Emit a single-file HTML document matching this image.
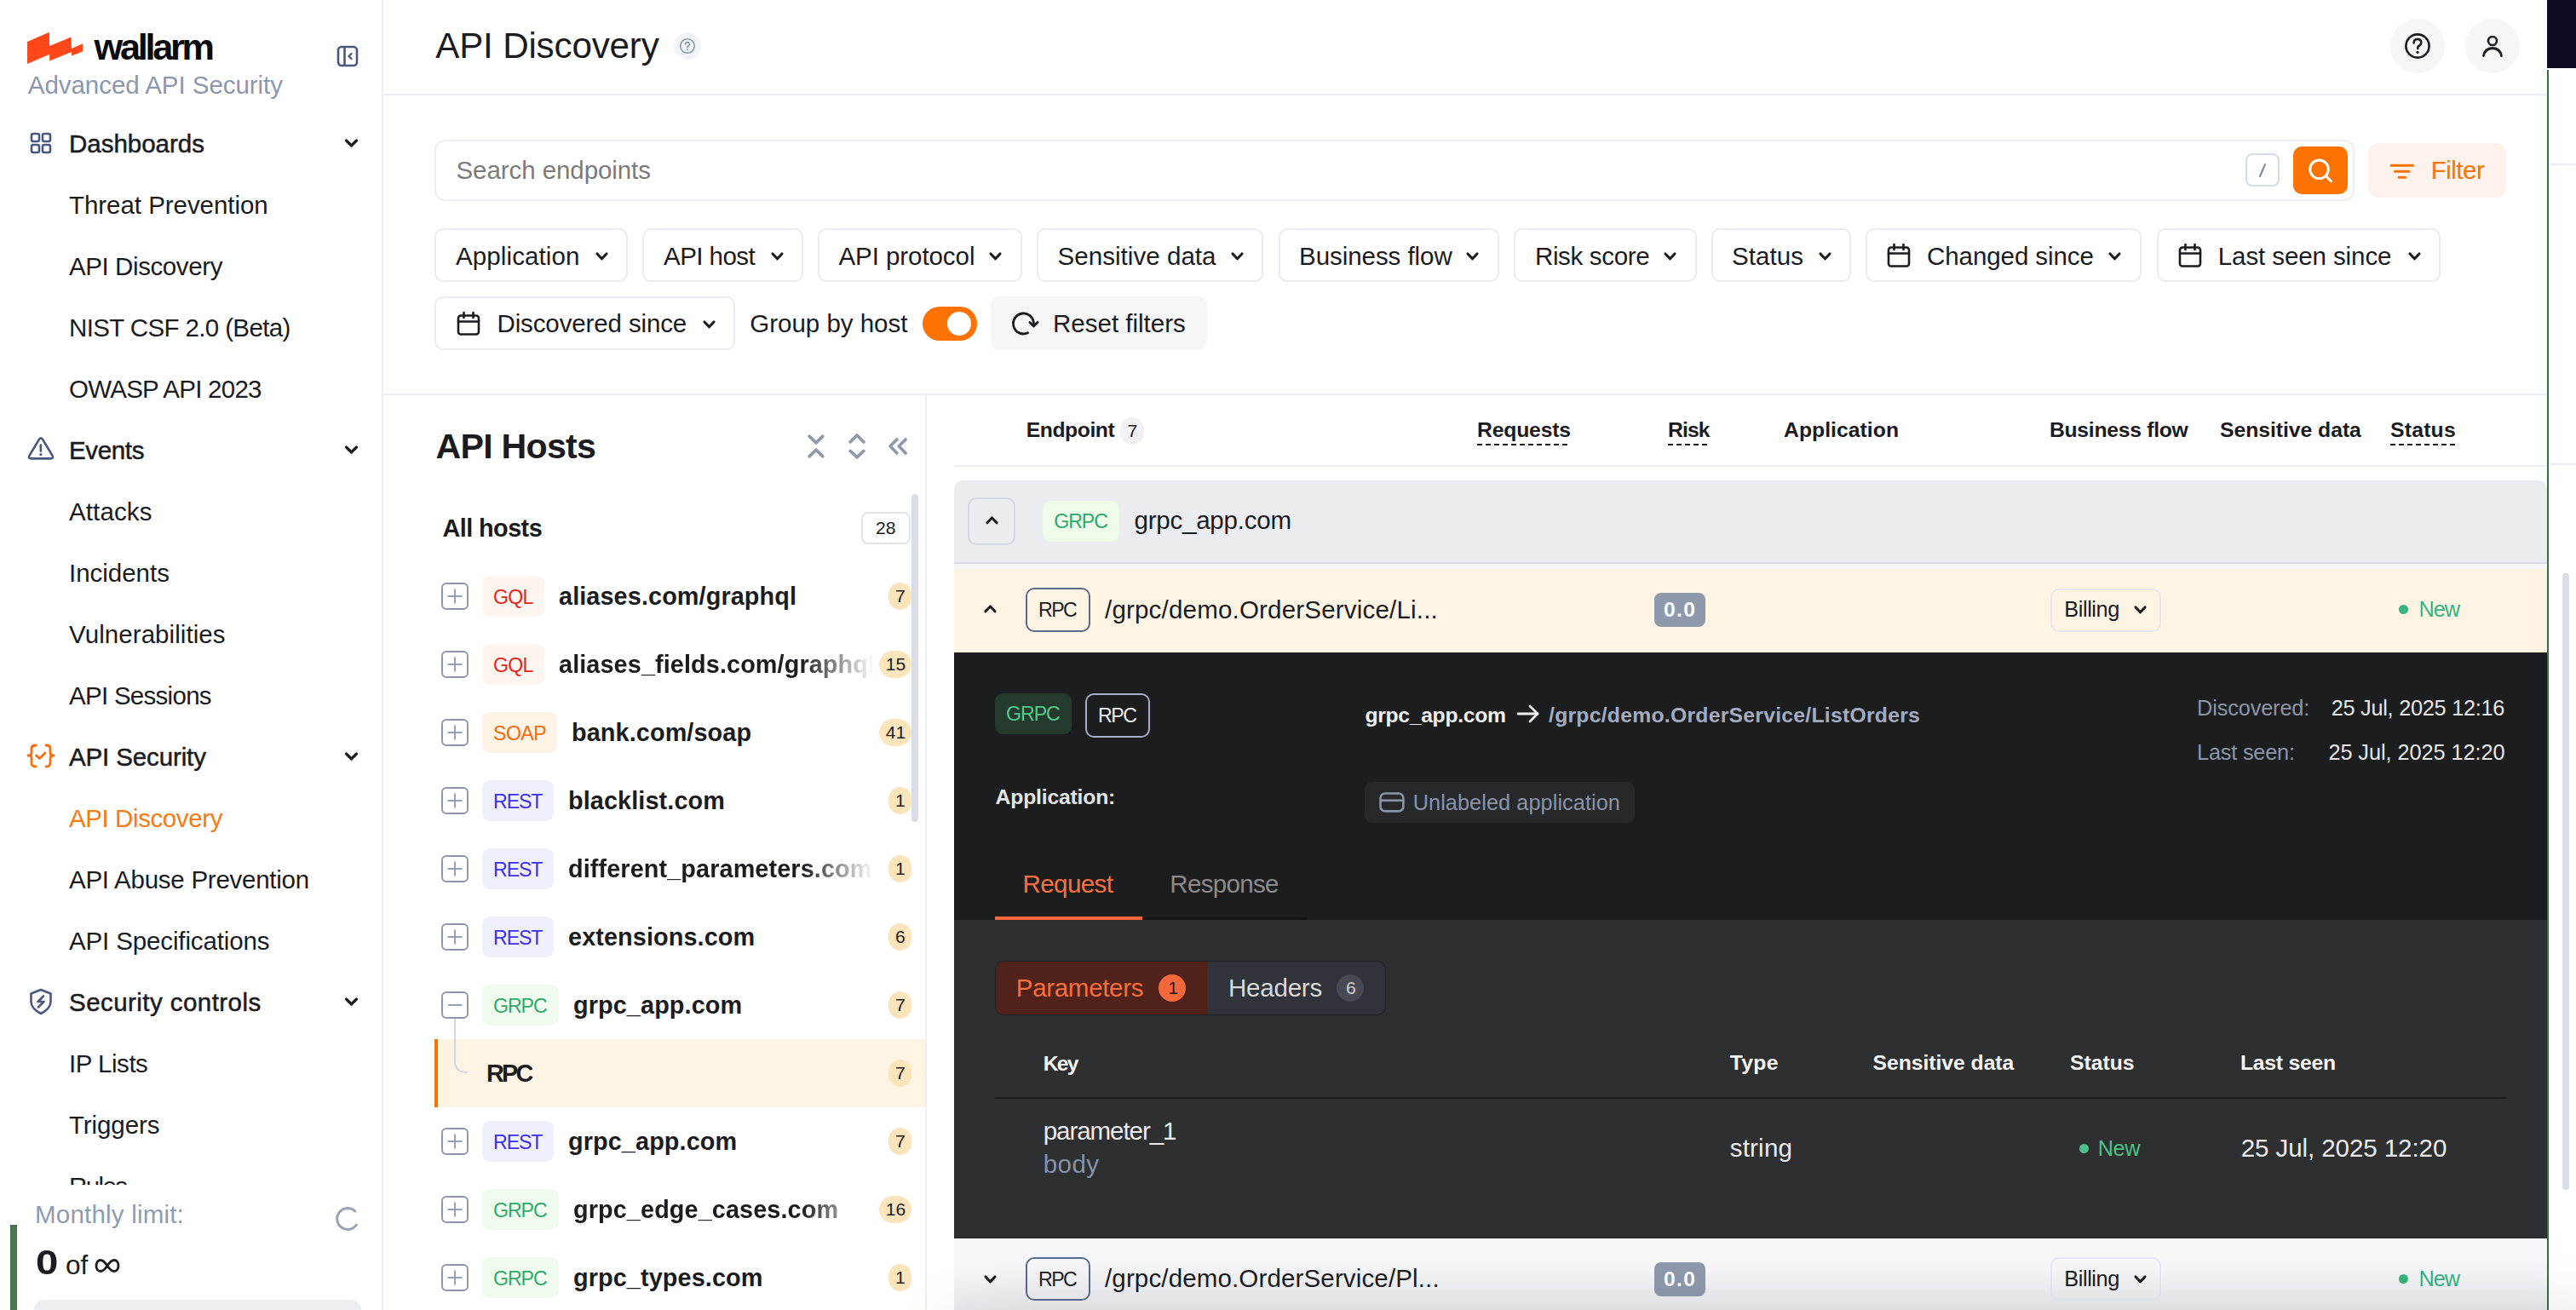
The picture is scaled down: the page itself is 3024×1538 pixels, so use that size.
<!DOCTYPE html><html><head><meta charset="utf-8"><style>
html,body{margin:0;padding:0;width:3024px;height:1538px;overflow:hidden;background:#fff;}
body{position:relative;font-family:"Liberation Sans",sans-serif;}
.t{position:absolute;white-space:nowrap;}
.b{position:absolute;box-sizing:border-box;}
.s{position:absolute;overflow:visible;}
</style></head><body>
<div class="b" style="left:448px;top:0px;width:2px;height:1538px;background:#eceef3"></div>
<svg class="s" style="left:28px;top:34px;" width="74" height="46" viewBox="28 34 74 46"><polygon fill="#ff4719" points="32.04,48.93 57.86,37.86 58.14,54.02 83.57,43.48 83.92,57.0 97.02,51.21 97.02,60.52 84.13,65.61 83.92,61.05 58.21,71.58 58.14,63.86 32.04,75.1"/></svg>
<div class="t" style="left:110.6px;top:34.4px;font-size:43.26px;line-height:43px;color:#0b0b0f;font-weight:700;letter-spacing:-3.29px;">wallarm</div>
<div class="t" style="left:32.8px;top:84.7px;font-size:29.54px;line-height:30px;color:#8b97ad;letter-spacing:-0.06px;">Advanced API Security</div>
<svg class="s" style="left:394px;top:52px;" width="28" height="28" viewBox="0 0 28 28"><rect x="3" y="3" width="22" height="22" rx="4" fill="none" stroke="#4a5880" stroke-width="2.6"/><line x1="10.5" y1="3" x2="10.5" y2="25" stroke="#4a5880" stroke-width="2.6"/><polyline points="18.5,11 15.5,14 18.5,17" fill="none" stroke="#4a5880" stroke-width="2.4" stroke-linecap="round" stroke-linejoin="round"/></svg>
<div class="t" style="left:81.0px;top:153.6px;font-size:29.54px;line-height:30px;color:#1b1c1f;letter-spacing:-0.03px;-webkit-text-stroke:0.5px #1b1c1f;">Dashboards</div>
<svg class="s" style="left:403px;top:162px;" width="18" height="12" viewBox="0 0 18 12"><polyline points="3.5,3 9.5,9 15.5,3" fill="none" stroke="#1b1c1f" stroke-width="3.2" stroke-linecap="round" stroke-linejoin="round"/></svg>
<div class="t" style="left:81.0px;top:225.6px;font-size:29.54px;line-height:30px;color:#1b1c1f;letter-spacing:-0.06px;">Threat Prevention</div>
<div class="t" style="left:81.0px;top:297.6px;font-size:29.54px;line-height:30px;color:#1b1c1f;letter-spacing:-0.42px;">API Discovery</div>
<div class="t" style="left:81.0px;top:369.6px;font-size:29.54px;line-height:30px;color:#1b1c1f;letter-spacing:-0.64px;">NIST CSF 2.0 (Beta)</div>
<div class="t" style="left:81.0px;top:441.6px;font-size:29.54px;line-height:30px;color:#1b1c1f;letter-spacing:-0.76px;">OWASP API 2023</div>
<div class="t" style="left:81.0px;top:513.6px;font-size:29.54px;line-height:30px;color:#1b1c1f;letter-spacing:-0.36px;-webkit-text-stroke:0.5px #1b1c1f;">Events</div>
<svg class="s" style="left:403px;top:522px;" width="18" height="12" viewBox="0 0 18 12"><polyline points="3.5,3 9.5,9 15.5,3" fill="none" stroke="#1b1c1f" stroke-width="3.2" stroke-linecap="round" stroke-linejoin="round"/></svg>
<div class="t" style="left:81.0px;top:585.6px;font-size:29.54px;line-height:30px;color:#1b1c1f;letter-spacing:0.11px;">Attacks</div>
<div class="t" style="left:81.0px;top:657.6px;font-size:29.54px;line-height:30px;color:#1b1c1f;letter-spacing:-0.03px;">Incidents</div>
<div class="t" style="left:81.0px;top:729.6px;font-size:29.54px;line-height:30px;color:#1b1c1f;letter-spacing:0.06px;">Vulnerabilities</div>
<div class="t" style="left:81.0px;top:801.6px;font-size:29.54px;line-height:30px;color:#1b1c1f;letter-spacing:-0.73px;">API Sessions</div>
<div class="t" style="left:81.0px;top:873.6px;font-size:29.54px;line-height:30px;color:#1b1c1f;letter-spacing:-0.14px;-webkit-text-stroke:0.5px #1b1c1f;">API Security</div>
<svg class="s" style="left:403px;top:882px;" width="18" height="12" viewBox="0 0 18 12"><polyline points="3.5,3 9.5,9 15.5,3" fill="none" stroke="#1b1c1f" stroke-width="3.2" stroke-linecap="round" stroke-linejoin="round"/></svg>
<div class="t" style="left:81.0px;top:945.6px;font-size:29.54px;line-height:30px;color:#f77a12;letter-spacing:-0.42px;">API Discovery</div>
<div class="t" style="left:81.0px;top:1017.6px;font-size:29.54px;line-height:30px;color:#1b1c1f;letter-spacing:-0.27px;">API Abuse Prevention</div>
<div class="t" style="left:81.0px;top:1089.6px;font-size:29.54px;line-height:30px;color:#1b1c1f;letter-spacing:-0.15px;">API Specifications</div>
<div class="t" style="left:81.0px;top:1161.6px;font-size:29.54px;line-height:30px;color:#1b1c1f;letter-spacing:0.43px;-webkit-text-stroke:0.5px #1b1c1f;">Security controls</div>
<svg class="s" style="left:403px;top:1170px;" width="18" height="12" viewBox="0 0 18 12"><polyline points="3.5,3 9.5,9 15.5,3" fill="none" stroke="#1b1c1f" stroke-width="3.2" stroke-linecap="round" stroke-linejoin="round"/></svg>
<div class="t" style="left:81.0px;top:1233.6px;font-size:29.54px;line-height:30px;color:#1b1c1f;letter-spacing:-0.49px;">IP Lists</div>
<div class="t" style="left:81.0px;top:1305.6px;font-size:29.54px;line-height:30px;color:#1b1c1f;letter-spacing:-0.10px;">Triggers</div>
<div class="t" style="left:81.0px;top:1377.6px;font-size:29.54px;line-height:30px;color:#1b1c1f;letter-spacing:-1.63px;">Rules</div>
<svg class="s" style="left:34px;top:154px;" width="28" height="28" viewBox="0 0 28 28"><g fill="none" stroke="#4a5880" stroke-width="2.6"><rect x="3" y="3" width="9" height="9" rx="2"/><rect x="16" y="3" width="9" height="9" rx="2"/><rect x="3" y="16" width="9" height="9" rx="2"/><rect x="16" y="16" width="9" height="9" rx="2"/></g></svg>
<svg class="s" style="left:31px;top:511px;" width="34" height="32" viewBox="0 0 34 32"><g fill="none" stroke="#4a5880" stroke-width="2.7" stroke-linejoin="round" stroke-linecap="round"><path d="M14.6 5.4 Q17 1.4 19.4 5.4 L30.2 23.4 Q32.6 27.3 28.1 27.3 L5.9 27.3 Q1.4 27.3 3.8 23.4 Z"/><line x1="16.85" y1="11.5" x2="16.85" y2="18.6"/></g><circle cx="16.85" cy="22.7" r="1.6" fill="#4a5880"/></svg>
<svg class="s" style="left:30px;top:872px;" width="36" height="32" viewBox="0 0 36 32"><g fill="none" stroke="#fc6d0a" stroke-width="2.8" stroke-linecap="round" stroke-linejoin="round"><path d="M12 3 Q7 3 7 7 L7 12 Q7 15 3 15 Q7 15 7 18 L7 24 Q7 28 12 28"/><path d="M24 3 Q29 3 29 7 L29 12 Q29 15 33 15 Q29 15 29 18 L29 24 Q29 28 24 28"/><polyline points="12.5,15 16.5,18.5 23,12"/></g></svg>
<svg class="s" style="left:33px;top:1159px;" width="30" height="34" viewBox="0 0 30 34"><g fill="none" stroke="#4a5880" stroke-width="2.6" stroke-linejoin="round" stroke-linecap="round"><path d="M15 3 L26.5 7.5 L26.5 17 Q26.5 25 15 31 Q3.5 25 3.5 17 L3.5 7.5 Z"/><path d="M18 10.5 L11.5 17 L18.5 17 L12 23.5"/></g></svg>
<div class="b" style="left:0px;top:1391px;width:448px;height:147px;background:#fff"></div>
<div class="b" style="left:12px;top:1438px;width:8px;height:100px;background:#4a7350"></div>
<div class="t" style="left:41.0px;top:1411.0px;font-size:29.54px;line-height:30px;color:#8f9bb0;letter-spacing:0.19px;">Monthly limit:</div>
<svg class="s" style="left:390px;top:1412px;" width="32" height="36" viewBox="0 0 32 36"><path d="M27 10 A12.5 12.5 0 1 0 28.5 26" fill="none" stroke="#9aa3b5" stroke-width="3" stroke-linecap="round"/></svg>
<div class="t" style="left:42.0px;top:1462.0px;font-size:41.2px;line-height:41px;color:#1b1c1f;font-weight:700;letter-spacing:0.00px;transform:scaleX(1.15);transform-origin:0 0;">0</div>
<div class="t" style="left:77.0px;top:1469.0px;font-size:31.65px;line-height:32px;color:#1b1c1f;letter-spacing:0.00px;">of</div>
<svg class="s" style="left:110px;top:1476px;" width="32" height="20" viewBox="0 0 32 20"><path d="M16 10 C13 5.5 10.5 3.5 8 3.5 C5 3.5 3 6.3 3 10 C3 13.7 5 16.5 8 16.5 C10.5 16.5 13 14.5 16 10 C19 5.5 21.5 3.5 24 3.5 C27 3.5 29 6.3 29 10 C29 13.7 27 16.5 24 16.5 C21.5 16.5 19 14.5 16 10 Z" fill="none" stroke="#1b1c1f" stroke-width="2.8"/></svg>
<div class="b" style="left:40px;top:1526px;width:384px;height:34px;background:#edeef2;border-radius:12px"></div>
<div class="b" style="left:450px;top:110px;width:2540px;height:2px;background:#eceef3"></div>
<div class="t" style="left:511.2px;top:33.2px;font-size:42.2px;line-height:42px;color:#1b1c1f;letter-spacing:-0.19px;">API Discovery</div>
<div class="b" style="left:791px;top:38px;width:32px;height:32px;background:#f3f4f6;border-radius:50%"></div>
<svg class="s" style="left:797px;top:44px;" width="20" height="20" viewBox="0 0 20 20"><circle cx="10" cy="10" r="8.3" fill="none" stroke="#8a9ab3" stroke-width="1.6"/><path d="M7.6 8.1 Q7.6 5.6 10 5.6 Q12.4 5.6 12.4 7.9 Q12.4 9.5 10 10.6 L10 11.8" fill="none" stroke="#8a9ab3" stroke-width="1.6" stroke-linecap="round"/><circle cx="10" cy="14.3" r="1" fill="#8a9ab3"/></svg>
<div class="b" style="left:2806px;top:22px;width:64px;height:64px;background:#f6f6f7;border-radius:50%"></div>
<svg class="s" style="left:2821px;top:37px;" width="34" height="34" viewBox="0 0 34 34"><circle cx="17" cy="17" r="13.6" fill="none" stroke="#1b1c1f" stroke-width="2.6"/><path d="M12.6 13.5 Q12.6 9 17 9 Q21.3 9 21.3 13 Q21.3 15.5 17.5 17.8 L17.3 20" fill="none" stroke="#1b1c1f" stroke-width="2.6" stroke-linecap="round"/><circle cx="17" cy="24.3" r="1.6" fill="#1b1c1f"/></svg>
<div class="b" style="left:2894px;top:22px;width:64px;height:64px;background:#f6f6f7;border-radius:50%"></div>
<svg class="s" style="left:2910px;top:40px;" width="32" height="32" viewBox="0 0 32 32"><circle cx="16" cy="8" r="5" fill="none" stroke="#1b1c1f" stroke-width="2.6"/><path d="M5.5 25.5 Q7 17 16 16.5 Q25 17 26.5 25.5" fill="none" stroke="#1b1c1f" stroke-width="2.8" stroke-linecap="round"/></svg>
<div class="b" style="left:2990px;top:0px;width:34px;height:80px;background:#0c0d22"></div>
<div class="b" style="left:2990px;top:82px;width:2px;height:1456px;background:#3b6b43"></div>
<div class="b" style="left:2993px;top:192px;width:31px;height:2px;background:#eceef3"></div>
<div class="b" style="left:2993px;top:544px;width:31px;height:2px;background:#eceef3"></div>
<div class="b" style="left:3008px;top:673px;width:8px;height:724px;background:#d9dde5;border-radius:4px"></div>
<div class="b" style="left:510px;top:164px;width:2254px;height:72px;border:2px solid #eceef3;border-radius:12px"></div>
<div class="t" style="left:535.5px;top:185.0px;font-size:29.54px;line-height:30px;color:#7b7b7d;letter-spacing:-0.09px;">Search endpoints</div>
<div class="b" style="left:2636px;top:180px;width:40px;height:39px;border:2px solid #d5dbe6;border-radius:8px"></div>
<svg class="s" style="left:2646px;top:189px;" width="20" height="22" viewBox="0 0 20 22"><line x1="13" y1="4" x2="7" y2="18" stroke="#7d879c" stroke-width="2" stroke-linecap="round"/></svg>
<div class="b" style="left:2692px;top:172px;width:64px;height:56px;background:#fc7303;border-radius:10px"></div>
<svg class="s" style="left:2706px;top:184px;" width="36" height="34" viewBox="0 0 36 34"><circle cx="16.5" cy="14.8" r="10.8" fill="none" stroke="#fff" stroke-width="3"/><line x1="24.5" y1="22.8" x2="30.5" y2="28.8" stroke="#fff" stroke-width="3" stroke-linecap="round"/></svg>
<div class="b" style="left:2780px;top:168px;width:162px;height:64px;background:#fdf2ec;border-radius:12px"></div>
<svg class="s" style="left:2804px;top:190px;" width="32" height="22" viewBox="0 0 32 22"><g stroke="#fc7303" stroke-width="3" stroke-linecap="round"><line x1="3" y1="4.3" x2="28.5" y2="4.3"/><line x1="7.5" y1="11.3" x2="24" y2="11.3"/><line x1="12" y1="18.3" x2="19.5" y2="18.3"/></g></svg>
<div class="t" style="left:2853.8px;top:185.0px;font-size:29.54px;line-height:30px;color:#fc7303;letter-spacing:-0.53px;">Filter</div>
<div class="b" style="left:510px;top:268px;width:227px;height:63px;border:2px solid #ebecf1;border-radius:10px"></div>
<div class="t" style="left:535.0px;top:285.7px;font-size:29.54px;line-height:30px;color:#1b1c1f;letter-spacing:0.10px;">Application</div>
<svg class="s" style="left:698px;top:295px;" width="17" height="11.8" viewBox="0 0 17 11.8"><polyline points="3,3 8.5,8.8 14,3" fill="none" stroke="#1b1c1f" stroke-width="3.1" stroke-linecap="round" stroke-linejoin="round"/></svg>
<div class="b" style="left:754px;top:268px;width:189px;height:63px;border:2px solid #ebecf1;border-radius:10px"></div>
<div class="t" style="left:779.0px;top:285.7px;font-size:29.54px;line-height:30px;color:#1b1c1f;letter-spacing:-0.55px;">API host</div>
<svg class="s" style="left:904px;top:295px;" width="17" height="11.8" viewBox="0 0 17 11.8"><polyline points="3,3 8.5,8.8 14,3" fill="none" stroke="#1b1c1f" stroke-width="3.1" stroke-linecap="round" stroke-linejoin="round"/></svg>
<div class="b" style="left:960px;top:268px;width:240px;height:63px;border:2px solid #ebecf1;border-radius:10px"></div>
<div class="t" style="left:984.4px;top:285.7px;font-size:29.54px;line-height:30px;color:#1b1c1f;letter-spacing:-0.07px;">API protocol</div>
<svg class="s" style="left:1160px;top:295px;" width="17" height="11.8" viewBox="0 0 17 11.8"><polyline points="3,3 8.5,8.8 14,3" fill="none" stroke="#1b1c1f" stroke-width="3.1" stroke-linecap="round" stroke-linejoin="round"/></svg>
<div class="b" style="left:1217px;top:268px;width:266px;height:63px;border:2px solid #ebecf1;border-radius:10px"></div>
<div class="t" style="left:1241.6px;top:285.7px;font-size:29.54px;line-height:30px;color:#1b1c1f;letter-spacing:0.03px;">Sensitive data</div>
<svg class="s" style="left:1444px;top:295px;" width="17" height="11.8" viewBox="0 0 17 11.8"><polyline points="3,3 8.5,8.8 14,3" fill="none" stroke="#1b1c1f" stroke-width="3.1" stroke-linecap="round" stroke-linejoin="round"/></svg>
<div class="b" style="left:1501px;top:268px;width:259px;height:63px;border:2px solid #ebecf1;border-radius:10px"></div>
<div class="t" style="left:1525.0px;top:285.7px;font-size:29.54px;line-height:30px;color:#1b1c1f;letter-spacing:-0.07px;">Business flow</div>
<svg class="s" style="left:1720px;top:295px;" width="17" height="11.8" viewBox="0 0 17 11.8"><polyline points="3,3 8.5,8.8 14,3" fill="none" stroke="#1b1c1f" stroke-width="3.1" stroke-linecap="round" stroke-linejoin="round"/></svg>
<div class="b" style="left:1777px;top:268px;width:215px;height:63px;border:2px solid #ebecf1;border-radius:10px"></div>
<div class="t" style="left:1801.9px;top:285.7px;font-size:29.54px;line-height:30px;color:#1b1c1f;letter-spacing:-0.34px;">Risk score</div>
<svg class="s" style="left:1952px;top:295px;" width="17" height="11.8" viewBox="0 0 17 11.8"><polyline points="3,3 8.5,8.8 14,3" fill="none" stroke="#1b1c1f" stroke-width="3.1" stroke-linecap="round" stroke-linejoin="round"/></svg>
<div class="b" style="left:2009px;top:268px;width:164px;height:63px;border:2px solid #ebecf1;border-radius:10px"></div>
<div class="t" style="left:2033.0px;top:285.7px;font-size:29.54px;line-height:30px;color:#1b1c1f;letter-spacing:0.05px;">Status</div>
<svg class="s" style="left:2134px;top:295px;" width="17" height="11.8" viewBox="0 0 17 11.8"><polyline points="3,3 8.5,8.8 14,3" fill="none" stroke="#1b1c1f" stroke-width="3.1" stroke-linecap="round" stroke-linejoin="round"/></svg>
<div class="b" style="left:2190px;top:268px;width:324px;height:63px;border:2px solid #ebecf1;border-radius:10px"></div>
<div class="t" style="left:2262.0px;top:285.7px;font-size:29.54px;line-height:30px;color:#1b1c1f;letter-spacing:-0.09px;">Changed since</div>
<svg class="s" style="left:2474px;top:295px;" width="17" height="11.8" viewBox="0 0 17 11.8"><polyline points="3,3 8.5,8.8 14,3" fill="none" stroke="#1b1c1f" stroke-width="3.1" stroke-linecap="round" stroke-linejoin="round"/></svg>
<svg class="s" style="left:2215px;top:285px;" width="28" height="30" viewBox="0 0 28 30"><g fill="none" stroke="#1b1c1f" stroke-width="2.6" stroke-linejoin="round" stroke-linecap="round"><rect x="2" y="5.5" width="24" height="22" rx="3"/><line x1="2" y1="12.5" x2="26" y2="12.5"/><line x1="8.5" y1="2" x2="8.5" y2="8"/><line x1="19.5" y1="2" x2="19.5" y2="8"/></g></svg>
<div class="b" style="left:2532px;top:268px;width:333px;height:63px;border:2px solid #ebecf1;border-radius:10px"></div>
<div class="t" style="left:2603.8px;top:285.7px;font-size:29.54px;line-height:30px;color:#1b1c1f;letter-spacing:-0.11px;">Last seen since</div>
<svg class="s" style="left:2826px;top:295px;" width="17" height="11.8" viewBox="0 0 17 11.8"><polyline points="3,3 8.5,8.8 14,3" fill="none" stroke="#1b1c1f" stroke-width="3.1" stroke-linecap="round" stroke-linejoin="round"/></svg>
<svg class="s" style="left:2557px;top:285px;" width="28" height="30" viewBox="0 0 28 30"><g fill="none" stroke="#1b1c1f" stroke-width="2.6" stroke-linejoin="round" stroke-linecap="round"><rect x="2" y="5.5" width="24" height="22" rx="3"/><line x1="2" y1="12.5" x2="26" y2="12.5"/><line x1="8.5" y1="2" x2="8.5" y2="8"/><line x1="19.5" y1="2" x2="19.5" y2="8"/></g></svg>
<div class="b" style="left:510px;top:348px;width:353px;height:63px;border:2px solid #ebecf1;border-radius:10px"></div>
<svg class="s" style="left:536px;top:365px;" width="28" height="30" viewBox="0 0 28 30"><g fill="none" stroke="#1b1c1f" stroke-width="2.6" stroke-linejoin="round" stroke-linecap="round"><rect x="2" y="5.5" width="24" height="22" rx="3"/><line x1="2" y1="12.5" x2="26" y2="12.5"/><line x1="8.5" y1="2" x2="8.5" y2="8"/><line x1="19.5" y1="2" x2="19.5" y2="8"/></g></svg>
<div class="t" style="left:583.5px;top:365.0px;font-size:29.54px;line-height:30px;color:#1b1c1f;letter-spacing:-0.14px;">Discovered since</div>
<svg class="s" style="left:824px;top:375px;" width="17" height="11.8" viewBox="0 0 17 11.8"><polyline points="3,3 8.5,8.8 14,3" fill="none" stroke="#1b1c1f" stroke-width="3.1" stroke-linecap="round" stroke-linejoin="round"/></svg>
<div class="t" style="left:880.3px;top:365.0px;font-size:29.54px;line-height:30px;color:#1b1c1f;letter-spacing:-0.03px;">Group by host</div>
<div class="b" style="left:1083px;top:360px;width:64px;height:40px;background:#fc7303;border-radius:20px"></div>
<div class="b" style="left:1112px;top:366px;width:28px;height:28px;background:#fff;border-radius:50%"></div>
<div class="b" style="left:1163px;top:348px;width:254px;height:63px;background:#f6f6f7;border-radius:10px"></div>
<svg class="s" style="left:1170px;top:350px;" width="70" height="60" viewBox="0 0 70 60"><g fill="none" stroke="#1b1c1f" stroke-width="2.8" stroke-linecap="round" stroke-linejoin="round"><path d="M36.6 40.8 A12 12 0 1 1 43.4 31"/><polyline points="38.9,28.6 43.5,33 48.1,28.2"/></g></svg>
<div class="t" style="left:1236.0px;top:365.0px;font-size:29.54px;line-height:30px;color:#1b1c1f;letter-spacing:-0.01px;">Reset filters</div>
<div class="b" style="left:450px;top:462px;width:2540px;height:2px;background:#eceef3"></div>
<div class="b" style="left:1086px;top:464px;width:2px;height:1074px;background:#eceef3"></div>
<div class="t" style="left:511.5px;top:504.4px;font-size:41.2px;line-height:41px;color:#1b1c1f;font-weight:700;letter-spacing:-0.76px;">API Hosts</div>
<svg class="s" style="left:930px;top:495px;" width="150" height="55" viewBox="0 0 150 55"><g fill="none" stroke="#8e99ab" stroke-width="3.7" stroke-linecap="round" stroke-linejoin="round"><polyline points="20.1,17.2 28,24.8 35.8,17.2"/><polyline points="20.1,40.8 28,33.2 35.8,40.8"/><polyline points="68.1,23.9 76,16 83.9,23.9"/><polyline points="68.1,34.4 76,41.9 83.9,34.4"/><polyline points="122.9,21 115,28.8 122.9,37"/><polyline points="133.1,21 125.2,28.8 133.1,37"/></g></svg>
<div class="b" style="left:1070px;top:580px;width:8px;height:385px;background:#d9dde6;border-radius:4px"></div>
<div class="t" style="left:519.5px;top:606.0px;font-size:28.84px;line-height:29px;color:#1b1c1f;font-weight:700;letter-spacing:-0.57px;">All hosts</div>
<div class="b" style="left:1011px;top:601px;width:58px;height:38px;border:2px solid #e2e5eb;border-radius:8px;background:#fff"></div>
<div class="t" style="left:1028.0px;top:608.6px;font-size:21.1px;line-height:21px;color:#1b1c1f;letter-spacing:0.00px;">28</div>
<div class="b" style="left:518px;top:684px;width:32px;height:32px;border:2px solid #8e99ae;border-radius:6px"></div>
<svg class="s" style="left:518px;top:684px;" width="32" height="32" viewBox="0 0 32 32"><line x1="7.5" y1="16" x2="24.5" y2="16" stroke="#8e99ae" stroke-width="1.8"/><line x1="16" y1="7.5" x2="16" y2="24.5" stroke="#8e99ae" stroke-width="1.8"/></svg>
<div class="b" style="left:566px;top:676px;width:73px;height:48px;background:#fef5f0;border-radius:9px"></div>
<div class="t" style="left:579.0px;top:689.5px;font-size:23.21px;line-height:23px;color:#e8231c;letter-spacing:-0.81px;">GQL</div>
<div class="t" style="left:656.0px;top:685.5px;font-size:28.84px;line-height:29px;color:#1b1c1f;font-weight:700;letter-spacing:0.10px;">aliases.com/graphql</div>
<div class="b" style="left:1042.88px;top:684px;width:27.11999999999989px;height:32px;background:#fde5bb;border-radius:16px"></div>
<div class="t" style="left:1050.9px;top:689.0px;font-size:21.1px;line-height:21px;color:#1b1c1f;letter-spacing:0.00px;">7</div>
<div class="b" style="left:518px;top:764px;width:32px;height:32px;border:2px solid #8e99ae;border-radius:6px"></div>
<svg class="s" style="left:518px;top:764px;" width="32" height="32" viewBox="0 0 32 32"><line x1="7.5" y1="16" x2="24.5" y2="16" stroke="#8e99ae" stroke-width="1.8"/><line x1="16" y1="7.5" x2="16" y2="24.5" stroke="#8e99ae" stroke-width="1.8"/></svg>
<div class="b" style="left:566px;top:756px;width:73px;height:48px;background:#fef5f0;border-radius:9px"></div>
<div class="t" style="left:579.0px;top:769.5px;font-size:23.21px;line-height:23px;color:#e8231c;letter-spacing:-0.81px;">GQL</div>
<div class="t" style="left:654px;top:750px;width:372px;height:60px;overflow:hidden;-webkit-mask-image:linear-gradient(to right,#000 0,#000 calc(100% - 85px),transparent 100%);mask-image:linear-gradient(to right,#000 0,#000 calc(100% - 85px),transparent 100%)">
<div class="t" style="left:2.0px;top:15.5px;font-size:28.84px;line-height:29px;font-weight:700;color:#1b1c1f;letter-spacing:0.1px">aliases_fields.com/graphql</div></div>
<div class="b" style="left:1031.76px;top:764px;width:38.24000000000001px;height:32px;background:#fde5bb;border-radius:16px"></div>
<div class="t" style="left:1039.8px;top:769.0px;font-size:21.1px;line-height:21px;color:#1b1c1f;letter-spacing:0.00px;">15</div>
<div class="b" style="left:518px;top:844px;width:32px;height:32px;border:2px solid #8e99ae;border-radius:6px"></div>
<svg class="s" style="left:518px;top:844px;" width="32" height="32" viewBox="0 0 32 32"><line x1="7.5" y1="16" x2="24.5" y2="16" stroke="#8e99ae" stroke-width="1.8"/><line x1="16" y1="7.5" x2="16" y2="24.5" stroke="#8e99ae" stroke-width="1.8"/></svg>
<div class="b" style="left:566px;top:836px;width:88px;height:48px;background:#fef4e6;border-radius:9px"></div>
<div class="t" style="left:579.0px;top:849.5px;font-size:23.21px;line-height:23px;color:#f26b0f;letter-spacing:-0.60px;">SOAP</div>
<div class="t" style="left:671.0px;top:845.5px;font-size:28.84px;line-height:29px;color:#1b1c1f;font-weight:700;letter-spacing:0.10px;">bank.com/soap</div>
<div class="b" style="left:1031.76px;top:844px;width:38.24000000000001px;height:32px;background:#fde5bb;border-radius:16px"></div>
<div class="t" style="left:1039.8px;top:849.0px;font-size:21.1px;line-height:21px;color:#1b1c1f;letter-spacing:0.00px;">41</div>
<div class="b" style="left:518px;top:924px;width:32px;height:32px;border:2px solid #8e99ae;border-radius:6px"></div>
<svg class="s" style="left:518px;top:924px;" width="32" height="32" viewBox="0 0 32 32"><line x1="7.5" y1="16" x2="24.5" y2="16" stroke="#8e99ae" stroke-width="1.8"/><line x1="16" y1="7.5" x2="16" y2="24.5" stroke="#8e99ae" stroke-width="1.8"/></svg>
<div class="b" style="left:566px;top:916px;width:84px;height:48px;background:#f0f0fd;border-radius:9px"></div>
<div class="t" style="left:579.0px;top:929.5px;font-size:23.21px;line-height:23px;color:#3b2ff0;letter-spacing:-1.13px;">REST</div>
<div class="t" style="left:667.0px;top:925.5px;font-size:28.84px;line-height:29px;color:#1b1c1f;font-weight:700;letter-spacing:0.10px;">blacklist.com</div>
<div class="b" style="left:1042.88px;top:924px;width:27.11999999999989px;height:32px;background:#fde5bb;border-radius:16px"></div>
<div class="t" style="left:1050.9px;top:929.0px;font-size:21.1px;line-height:21px;color:#1b1c1f;letter-spacing:0.00px;">1</div>
<div class="b" style="left:518px;top:1004px;width:32px;height:32px;border:2px solid #8e99ae;border-radius:6px"></div>
<svg class="s" style="left:518px;top:1004px;" width="32" height="32" viewBox="0 0 32 32"><line x1="7.5" y1="16" x2="24.5" y2="16" stroke="#8e99ae" stroke-width="1.8"/><line x1="16" y1="7.5" x2="16" y2="24.5" stroke="#8e99ae" stroke-width="1.8"/></svg>
<div class="b" style="left:566px;top:996px;width:84px;height:48px;background:#f0f0fd;border-radius:9px"></div>
<div class="t" style="left:579.0px;top:1009.5px;font-size:23.21px;line-height:23px;color:#3b2ff0;letter-spacing:-1.13px;">REST</div>
<div class="t" style="left:665px;top:990px;width:361px;height:60px;overflow:hidden;-webkit-mask-image:linear-gradient(to right,#000 0,#000 calc(100% - 85px),transparent 100%);mask-image:linear-gradient(to right,#000 0,#000 calc(100% - 85px),transparent 100%)">
<div class="t" style="left:2.0px;top:15.5px;font-size:28.84px;line-height:29px;font-weight:700;color:#1b1c1f;letter-spacing:0.1px">different_parameters.com</div></div>
<div class="b" style="left:1042.88px;top:1004px;width:27.11999999999989px;height:32px;background:#fde5bb;border-radius:16px"></div>
<div class="t" style="left:1050.9px;top:1009.0px;font-size:21.1px;line-height:21px;color:#1b1c1f;letter-spacing:0.00px;">1</div>
<div class="b" style="left:518px;top:1084px;width:32px;height:32px;border:2px solid #8e99ae;border-radius:6px"></div>
<svg class="s" style="left:518px;top:1084px;" width="32" height="32" viewBox="0 0 32 32"><line x1="7.5" y1="16" x2="24.5" y2="16" stroke="#8e99ae" stroke-width="1.8"/><line x1="16" y1="7.5" x2="16" y2="24.5" stroke="#8e99ae" stroke-width="1.8"/></svg>
<div class="b" style="left:566px;top:1076px;width:84px;height:48px;background:#f0f0fd;border-radius:9px"></div>
<div class="t" style="left:579.0px;top:1089.5px;font-size:23.21px;line-height:23px;color:#3b2ff0;letter-spacing:-1.13px;">REST</div>
<div class="t" style="left:667.0px;top:1085.5px;font-size:28.84px;line-height:29px;color:#1b1c1f;font-weight:700;letter-spacing:0.10px;">extensions.com</div>
<div class="b" style="left:1042.88px;top:1084px;width:27.11999999999989px;height:32px;background:#fde5bb;border-radius:16px"></div>
<div class="t" style="left:1050.9px;top:1089.0px;font-size:21.1px;line-height:21px;color:#1b1c1f;letter-spacing:0.00px;">6</div>
<div class="b" style="left:518px;top:1164px;width:32px;height:32px;border:2px solid #8e99ae;border-radius:6px"></div>
<svg class="s" style="left:518px;top:1164px;" width="32" height="32" viewBox="0 0 32 32"><line x1="8" y1="16" x2="24.5" y2="16" stroke="#8e99ae" stroke-width="1.8"/></svg>
<div class="b" style="left:566px;top:1156px;width:90px;height:48px;background:#f0fbed;border-radius:9px"></div>
<div class="t" style="left:579.0px;top:1169.5px;font-size:23.21px;line-height:23px;color:#2eaa6c;letter-spacing:-1.12px;">GRPC</div>
<div class="t" style="left:673.0px;top:1165.5px;font-size:28.84px;line-height:29px;color:#1b1c1f;font-weight:700;letter-spacing:0.10px;">grpc_app.com</div>
<div class="b" style="left:1042.88px;top:1164px;width:27.11999999999989px;height:32px;background:#fde5bb;border-radius:16px"></div>
<div class="t" style="left:1050.9px;top:1169.0px;font-size:21.1px;line-height:21px;color:#1b1c1f;letter-spacing:0.00px;">7</div>
<div class="b" style="left:510px;top:1220px;width:576px;height:80px;background:#fef4e4"></div>
<div class="b" style="left:510px;top:1220px;width:4px;height:80px;background:#fc7303"></div>
<svg class="s" style="left:530px;top:1196px;" width="24" height="66" viewBox="0 0 24 66"><path d="M4 0 L4 50 Q4 63 18.5 63" fill="none" stroke="#d2d8e2" stroke-width="2"/></svg>
<div class="t" style="left:571.0px;top:1246.0px;font-size:28.84px;line-height:29px;color:#1b1c1f;font-weight:700;letter-spacing:-2.74px;">RPC</div>
<div class="b" style="left:1042.88px;top:1244px;width:27.11999999999989px;height:32px;background:#fde5bb;border-radius:16px"></div>
<div class="t" style="left:1050.9px;top:1249.0px;font-size:21.1px;line-height:21px;color:#1b1c1f;letter-spacing:0.00px;">7</div>
<div class="b" style="left:518px;top:1324px;width:32px;height:32px;border:2px solid #8e99ae;border-radius:6px"></div>
<svg class="s" style="left:518px;top:1324px;" width="32" height="32" viewBox="0 0 32 32"><line x1="7.5" y1="16" x2="24.5" y2="16" stroke="#8e99ae" stroke-width="1.8"/><line x1="16" y1="7.5" x2="16" y2="24.5" stroke="#8e99ae" stroke-width="1.8"/></svg>
<div class="b" style="left:566px;top:1316px;width:84px;height:48px;background:#f0f0fd;border-radius:9px"></div>
<div class="t" style="left:579.0px;top:1329.5px;font-size:23.21px;line-height:23px;color:#3b2ff0;letter-spacing:-1.13px;">REST</div>
<div class="t" style="left:667.0px;top:1325.5px;font-size:28.84px;line-height:29px;color:#1b1c1f;font-weight:700;letter-spacing:0.10px;">grpc_app.com</div>
<div class="b" style="left:1042.88px;top:1324px;width:27.11999999999989px;height:32px;background:#fde5bb;border-radius:16px"></div>
<div class="t" style="left:1050.9px;top:1329.0px;font-size:21.1px;line-height:21px;color:#1b1c1f;letter-spacing:0.00px;">7</div>
<div class="b" style="left:518px;top:1404px;width:32px;height:32px;border:2px solid #8e99ae;border-radius:6px"></div>
<svg class="s" style="left:518px;top:1404px;" width="32" height="32" viewBox="0 0 32 32"><line x1="7.5" y1="16" x2="24.5" y2="16" stroke="#8e99ae" stroke-width="1.8"/><line x1="16" y1="7.5" x2="16" y2="24.5" stroke="#8e99ae" stroke-width="1.8"/></svg>
<div class="b" style="left:566px;top:1396px;width:90px;height:48px;background:#f0fbed;border-radius:9px"></div>
<div class="t" style="left:579.0px;top:1409.5px;font-size:23.21px;line-height:23px;color:#2eaa6c;letter-spacing:-1.12px;">GRPC</div>
<div class="t" style="left:671px;top:1390px;width:355px;height:60px;overflow:hidden;-webkit-mask-image:linear-gradient(to right,#000 0,#000 calc(100% - 85px),transparent 100%);mask-image:linear-gradient(to right,#000 0,#000 calc(100% - 85px),transparent 100%)">
<div class="t" style="left:2.0px;top:15.5px;font-size:28.84px;line-height:29px;font-weight:700;color:#1b1c1f;letter-spacing:0.1px">grpc_edge_cases.com</div></div>
<div class="b" style="left:1031.76px;top:1404px;width:38.24000000000001px;height:32px;background:#fde5bb;border-radius:16px"></div>
<div class="t" style="left:1039.8px;top:1409.0px;font-size:21.1px;line-height:21px;color:#1b1c1f;letter-spacing:0.00px;">16</div>
<div class="b" style="left:518px;top:1484px;width:32px;height:32px;border:2px solid #8e99ae;border-radius:6px"></div>
<svg class="s" style="left:518px;top:1484px;" width="32" height="32" viewBox="0 0 32 32"><line x1="7.5" y1="16" x2="24.5" y2="16" stroke="#8e99ae" stroke-width="1.8"/><line x1="16" y1="7.5" x2="16" y2="24.5" stroke="#8e99ae" stroke-width="1.8"/></svg>
<div class="b" style="left:566px;top:1476px;width:90px;height:48px;background:#f0fbed;border-radius:9px"></div>
<div class="t" style="left:579.0px;top:1489.5px;font-size:23.21px;line-height:23px;color:#2eaa6c;letter-spacing:-1.12px;">GRPC</div>
<div class="t" style="left:673.0px;top:1485.5px;font-size:28.84px;line-height:29px;color:#1b1c1f;font-weight:700;letter-spacing:0.10px;">grpc_types.com</div>
<div class="b" style="left:1042.88px;top:1484px;width:27.11999999999989px;height:32px;background:#fde5bb;border-radius:16px"></div>
<div class="t" style="left:1050.9px;top:1489.0px;font-size:21.1px;line-height:21px;color:#1b1c1f;letter-spacing:0.00px;">1</div>
<div class="b" style="left:1120px;top:546px;width:1870px;height:2px;background:#eceef3"></div>
<div class="t" style="left:1204.8px;top:492.0px;font-size:24.72px;line-height:25px;color:#1b1c1f;font-weight:700;letter-spacing:-0.46px;">Endpoint</div>
<div class="b" style="left:1315px;top:490px;width:28px;height:32px;background:#f2f2f4;border-radius:16px"></div>
<div class="t" style="left:1323.6px;top:495.0px;font-size:21.1px;line-height:21px;color:#1b1c1f;letter-spacing:0.00px;">7</div>
<div class="t" style="left:1734.0px;top:492.0px;font-size:24.72px;line-height:25px;color:#1b1c1f;font-weight:700;letter-spacing:-0.18px;">Requests</div>
<div class="b" style="left:1734px;top:521px;width:110px;height:2px;background:repeating-linear-gradient(to right,#1b1c1f 0,#1b1c1f 6px,transparent 6px,transparent 10px)"></div>
<div class="t" style="left:1958.0px;top:492.0px;font-size:24.72px;line-height:25px;color:#1b1c1f;font-weight:700;letter-spacing:-0.89px;">Risk</div>
<div class="b" style="left:1958px;top:521px;width:49.59999999999991px;height:2px;background:repeating-linear-gradient(to right,#1b1c1f 0,#1b1c1f 6px,transparent 6px,transparent 10px)"></div>
<div class="t" style="left:2094.0px;top:492.0px;font-size:24.72px;line-height:25px;color:#1b1c1f;font-weight:700;letter-spacing:0.04px;">Application</div>
<div class="t" style="left:2405.9px;top:492.0px;font-size:24.72px;line-height:25px;color:#1b1c1f;font-weight:700;letter-spacing:-0.27px;">Business flow</div>
<div class="t" style="left:2606.0px;top:492.0px;font-size:24.72px;line-height:25px;color:#1b1c1f;font-weight:700;letter-spacing:-0.03px;">Sensitive data</div>
<div class="t" style="left:2806.0px;top:492.0px;font-size:24.72px;line-height:25px;color:#1b1c1f;font-weight:700;letter-spacing:0.23px;">Status</div>
<div class="b" style="left:2806px;top:521px;width:76.69999999999982px;height:2px;background:repeating-linear-gradient(to right,#1b1c1f 0,#1b1c1f 6px,transparent 6px,transparent 10px)"></div>
<div class="b" style="left:1120px;top:564px;width:1870px;height:98px;background:#ecedf1;border-radius:10px 10px 0 0"></div>
<div class="b" style="left:1120px;top:660px;width:1870px;height:2px;background:#d8dbe3"></div>
<div class="b" style="left:1120px;top:662px;width:1870px;height:6px;background:#f6f6f9"></div>
<div class="b" style="left:1136px;top:584px;width:56px;height:56px;border:2px solid #d3d8e2;border-radius:10px"></div>
<svg class="s" style="left:1156px;top:605px;" width="17" height="11.8" viewBox="0 0 17 11.8"><polyline points="3,8.8 8.5,3 14,8.8" fill="none" stroke="#1b1c1f" stroke-width="3.1" stroke-linecap="round" stroke-linejoin="round"/></svg>
<div class="b" style="left:1224px;top:588px;width:90px;height:48px;background:#eefbe9;border-radius:9px"></div>
<div class="t" style="left:1237.3px;top:600.9px;font-size:23.21px;line-height:23px;color:#2fa96e;letter-spacing:-1.12px;">GRPC</div>
<div class="t" style="left:1331.5px;top:596.0px;font-size:29.54px;line-height:30px;color:#1b1c1f;letter-spacing:-0.24px;">grpc_app.com</div>
<div class="b" style="left:1120px;top:668px;width:1870px;height:98px;background:#fef4e3"></div>
<svg class="s" style="left:1154px;top:709px;" width="17" height="11.8" viewBox="0 0 17 11.8"><polyline points="3,8.8 8.5,3 14,8.8" fill="none" stroke="#1b1c1f" stroke-width="3.1" stroke-linecap="round" stroke-linejoin="round"/></svg>
<div class="b" style="left:1204px;top:690px;width:76px;height:52px;border:2px solid #5a6a8f;border-radius:10px"></div>
<div class="t" style="left:1219.0px;top:705.3px;font-size:23.21px;line-height:23px;color:#1b1c1f;letter-spacing:-1.60px;">RPC</div>
<div class="t" style="left:1297.0px;top:700.5px;font-size:29.54px;line-height:30px;color:#1b1c1f;letter-spacing:0.18px;">/grpc/demo.OrderService/Li...</div>
<div class="b" style="left:1942px;top:696px;width:60px;height:40px;background:#8e99ad;border-radius:8px"></div>
<div class="t" style="left:1953.0px;top:703.0px;font-size:24.72px;line-height:25px;color:#ffffff;font-weight:700;letter-spacing:1.32px;">0.0</div>
<div class="b" style="left:2407px;top:691px;width:130px;height:51px;border:2px solid #e6e9f2;border-radius:10px"></div>
<div class="t" style="left:2423.3px;top:702.7px;font-size:25.32px;line-height:25px;color:#1b1c1f;letter-spacing:-0.43px;">Billing</div>
<svg class="s" style="left:2504px;top:710px;" width="17" height="11.8" viewBox="0 0 17 11.8"><polyline points="3,3 8.5,8.8 14,3" fill="none" stroke="#1b1c1f" stroke-width="3.1" stroke-linecap="round" stroke-linejoin="round"/></svg>
<div class="b" style="left:2816px;top:710px;width:11px;height:11px;background:#36b37e;border-radius:50%"></div>
<div class="t" style="left:2839.6px;top:702.7px;font-size:25.32px;line-height:25px;color:#36b37e;letter-spacing:-1.06px;">New</div>
<div class="b" style="left:1120px;top:766px;width:1870px;height:314px;background:#1c1d1f"></div>
<div class="b" style="left:1168px;top:814px;width:90px;height:48px;background:#233a2c;border-radius:9px"></div>
<div class="t" style="left:1181.0px;top:826.9px;font-size:23.21px;line-height:23px;color:#55c98a;letter-spacing:-1.08px;">GRPC</div>
<div class="b" style="left:1274px;top:814px;width:76px;height:52px;border:2px solid #a5aec4;border-radius:10px"></div>
<div class="t" style="left:1289.0px;top:829.0px;font-size:23.21px;line-height:23px;color:#ececec;letter-spacing:-1.50px;">RPC</div>
<div class="t" style="left:1602.4px;top:827.0px;font-size:24.72px;line-height:25px;color:#f0f0f0;font-weight:700;letter-spacing:-0.31px;">grpc_app.com</div>
<svg class="s" style="left:1778px;top:824px;" width="32" height="28" viewBox="0 0 32 28"><g fill="none" stroke="#f0f0f0" stroke-width="2.8" stroke-linecap="round" stroke-linejoin="round"><line x1="4" y1="14" x2="27" y2="14"/><polyline points="18,5 27,14 18,23"/></g></svg>
<div class="t" style="left:1818.0px;top:827.0px;font-size:24.72px;line-height:25px;color:#a3acc0;font-weight:700;letter-spacing:0.26px;">/grpc/demo.OrderService/ListOrders</div>
<div class="t" style="left:2579.0px;top:819.3px;font-size:25.32px;line-height:25px;color:#8d95a7;letter-spacing:-0.13px;">Discovered:</div>
<div class="t" style="left:2736.7px;top:819.3px;font-size:25.32px;line-height:25px;color:#e6e6e6;letter-spacing:-0.27px;">25 Jul, 2025 12:16</div>
<div class="t" style="left:2579.0px;top:870.7px;font-size:25.32px;line-height:25px;color:#8d95a7;letter-spacing:-0.20px;">Last seen:</div>
<div class="t" style="left:2733.4px;top:870.7px;font-size:25.32px;line-height:25px;color:#e6e6e6;letter-spacing:-0.07px;">25 Jul, 2025 12:20</div>
<div class="t" style="left:1168.6px;top:923.0px;font-size:24.72px;line-height:25px;color:#e6e6e6;font-weight:700;letter-spacing:-0.19px;">Application:</div>
<div class="b" style="left:1602px;top:918px;width:317px;height:48px;background:#26282c;border-radius:9px"></div>
<svg class="s" style="left:1616px;top:928px;" width="36" height="30" viewBox="0 0 36 30"><rect x="4.5" y="3.5" width="26.9" height="20.9" rx="5.5" fill="none" stroke="#8c94a7" stroke-width="2.6"/><line x1="4.5" y1="11.8" x2="31.4" y2="11.8" stroke="#8c94a7" stroke-width="2.6"/></svg>
<div class="t" style="left:1658.7px;top:930.0px;font-size:25.32px;line-height:25px;color:#8c94a7;letter-spacing:0.06px;">Unlabeled application</div>
<div class="b" style="left:1168px;top:1077px;width:366px;height:3px;background:#141517"></div>
<div class="b" style="left:1168px;top:1076px;width:173px;height:4px;background:#f6683c"></div>
<div class="t" style="left:1200.5px;top:1022.5px;font-size:29.54px;line-height:30px;color:#fd6f3d;letter-spacing:-0.59px;">Request</div>
<div class="t" style="left:1373.3px;top:1022.5px;font-size:29.54px;line-height:30px;color:#8b8b8b;letter-spacing:-0.69px;">Response</div>
<div class="b" style="left:1120px;top:1080px;width:1870px;height:374px;background:#2e2f31"></div>
<div class="b" style="left:1168px;top:1128px;width:459px;height:64px;background:#1f2023;border-radius:11px"></div>
<div class="b" style="left:1169px;top:1129px;width:248px;height:62px;background:#512219;border-radius:9px 0 0 9px"></div>
<div class="b" style="left:1417px;top:1129px;width:209px;height:62px;background:#30333a;border-radius:0 9px 9px 0"></div>
<div class="t" style="left:1192.8px;top:1144.8px;font-size:29.54px;line-height:30px;color:#f86e3c;letter-spacing:-0.33px;">Parameters</div>
<div class="b" style="left:1360px;top:1144px;width:32px;height:32px;background:#f6683c;border-radius:50%"></div>
<div class="t" style="left:1371.3px;top:1148.5px;font-size:21.1px;line-height:21px;color:#1c1d1f;letter-spacing:0.00px;">1</div>
<div class="t" style="left:1442.0px;top:1144.8px;font-size:29.54px;line-height:30px;color:#dadada;letter-spacing:-0.24px;">Headers</div>
<div class="b" style="left:1569px;top:1144px;width:32px;height:32px;background:#474a52;border-radius:50%"></div>
<div class="t" style="left:1580.0px;top:1148.5px;font-size:21.1px;line-height:21px;color:#cfcfcf;letter-spacing:0.00px;">6</div>
<div class="t" style="left:1224.7px;top:1235.5px;font-size:24.72px;line-height:25px;color:#f5f5f5;font-weight:700;letter-spacing:-1.72px;">Key</div>
<div class="t" style="left:2030.7px;top:1235.0px;font-size:24.72px;line-height:25px;color:#f5f5f5;font-weight:700;letter-spacing:0.28px;">Type</div>
<div class="t" style="left:2198.6px;top:1235.0px;font-size:24.72px;line-height:25px;color:#f5f5f5;font-weight:700;letter-spacing:-0.04px;">Sensitive data</div>
<div class="t" style="left:2430.0px;top:1235.0px;font-size:24.72px;line-height:25px;color:#f5f5f5;font-weight:700;letter-spacing:0.01px;">Status</div>
<div class="t" style="left:2630.0px;top:1235.0px;font-size:24.72px;line-height:25px;color:#f5f5f5;font-weight:700;letter-spacing:-0.25px;">Last seen</div>
<div class="b" style="left:1168px;top:1288px;width:1774px;height:2px;background:#1c1d20"></div>
<div class="t" style="left:1224.7px;top:1313.0px;font-size:29.54px;line-height:30px;color:#ececec;letter-spacing:-1.06px;">parameter_1</div>
<div class="t" style="left:1224.7px;top:1352.0px;font-size:29.54px;line-height:30px;color:#8892a8;letter-spacing:0.42px;">body</div>
<div class="t" style="left:2030.7px;top:1333.4px;font-size:29.54px;line-height:30px;color:#ececec;letter-spacing:0.21px;">string</div>
<div class="b" style="left:2441px;top:1343px;width:11px;height:11px;background:#50c08a;border-radius:50%"></div>
<div class="t" style="left:2462.8px;top:1336.0px;font-size:25.32px;line-height:25px;color:#50c08a;letter-spacing:-0.51px;">New</div>
<div class="t" style="left:2630.7px;top:1333.4px;font-size:29.54px;line-height:30px;color:#ececec;letter-spacing:-0.08px;">25 Jul, 2025 12:20</div>
<div class="b" style="left:1120px;top:1454px;width:1870px;height:84px;background:linear-gradient(to bottom,#f7f7f9 0%,#f7f7f9 40%,#e9eaee 100%)"></div>
<svg class="s" style="left:1154px;top:1496px;" width="17" height="11.8" viewBox="0 0 17 11.8"><polyline points="3,3 8.5,8.8 14,3" fill="none" stroke="#1b1c1f" stroke-width="3.1" stroke-linecap="round" stroke-linejoin="round"/></svg>
<div class="b" style="left:1204px;top:1476px;width:76px;height:51px;border:2px solid #5a6a8f;border-radius:10px"></div>
<div class="t" style="left:1219.0px;top:1491.0px;font-size:23.21px;line-height:23px;color:#1b1c1f;letter-spacing:-1.60px;">RPC</div>
<div class="t" style="left:1297.0px;top:1486.0px;font-size:29.54px;line-height:30px;color:#1b1c1f;letter-spacing:0.13px;">/grpc/demo.OrderService/Pl...</div>
<div class="b" style="left:1942px;top:1482px;width:60px;height:40px;background:#8e99ad;border-radius:8px"></div>
<div class="t" style="left:1953.0px;top:1489.0px;font-size:24.72px;line-height:25px;color:#ffffff;font-weight:700;letter-spacing:1.32px;">0.0</div>
<div class="b" style="left:2407px;top:1476px;width:130px;height:51px;border:2px solid #e6e9f2;border-radius:10px"></div>
<div class="t" style="left:2423.3px;top:1488.5px;font-size:25.32px;line-height:25px;color:#1b1c1f;letter-spacing:-0.43px;">Billing</div>
<svg class="s" style="left:2504px;top:1496px;" width="17" height="11.8" viewBox="0 0 17 11.8"><polyline points="3,3 8.5,8.8 14,3" fill="none" stroke="#1b1c1f" stroke-width="3.1" stroke-linecap="round" stroke-linejoin="round"/></svg>
<div class="b" style="left:2816px;top:1496px;width:11px;height:11px;background:#36b37e;border-radius:50%"></div>
<div class="t" style="left:2839.6px;top:1488.5px;font-size:25.32px;line-height:25px;color:#36b37e;letter-spacing:-1.06px;">New</div>
<div class="b" style="left:1150px;top:1575px;width:1900px;height:60px;box-shadow:0 0 90px 20px rgba(30,32,45,0.16)"></div>
</body></html>
